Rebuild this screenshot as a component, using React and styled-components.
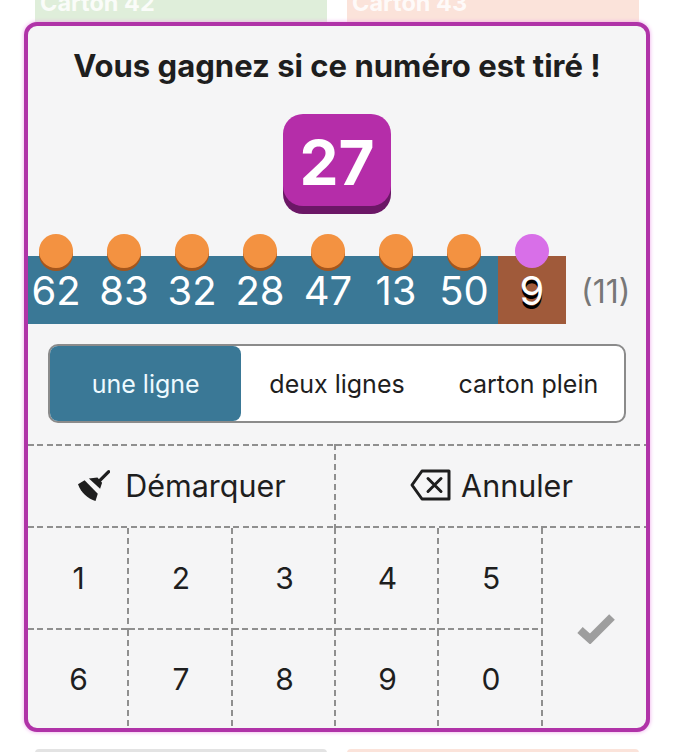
import React from "react";
import styled, { createGlobalStyle } from "styled-components";

const Global = createGlobalStyle`
  html, body { margin: 0; padding: 0; background: #fff; height: 752px; overflow: hidden; }
  * { box-sizing: border-box; }
  body { font-family: Inter, "Liberation Sans", sans-serif; color: #1e1e1e; }
`;

const DASH = "#8f8f8f";
const hDash = `repeating-linear-gradient(to right, ${DASH} 0 6px, transparent 6px 9.33px)`;
const vDash = `repeating-linear-gradient(to bottom, ${DASH} 0 6px, transparent 6px 10px)`;

const Page = styled.div`
  width: 674px;
  height: 752px;
  overflow: hidden;
  display: flex;
  flex-direction: column;
`;
const CardRow = styled.div`
  display: grid;
  grid-template-columns: 292px 292px;
  gap: 20px;
  padding: 0 35px;
  height: ${p => p.$h}px;
  margin-top: ${p => p.$gap || 0}px;
  flex: none;
`;
const Card = styled.div`
  background: ${p => p.$bg};
  border-radius: ${p => (p.$top ? "0" : "4px 4px 0 0")};
  padding: 0 5px;
  overflow: hidden;
`;
const CardTitle = styled.div`
  margin-top: -11px;
  color: rgba(255, 255, 255, 0.85);
  font-size: 23.5px;
  font-weight: 700;
  line-height: 28px;
`;
const Panel = styled.div`
  margin: 0 24px;
  width: 626px;
  height: 710px;
  flex: none;
  border: 4px solid #b033a8;
  border-radius: 13px;
  background: #f5f5f6;
  box-shadow: 0 0 4px #eda6ea;
  overflow: hidden;
  display: flex;
  flex-direction: column;
`;
const Title = styled.h1`
  margin: 22px 0 0;
  font-size: 31.05px;
  line-height: 36px;
  font-weight: 700;
  text-align: center;
  white-space: nowrap;
`;
const TileWrap = styled.div`
  display: flex;
  justify-content: center;
  margin-top: 30px;
  padding-bottom: 8px;
`;
const Tile = styled.div`
  width: 108px;
  height: 92px;
  border-radius: 20px;
  background: #b52da9;
  box-shadow: 0 8px 0 #6b1766;
  color: #fff;
  font-size: 62px;
  font-weight: 700;
  display: flex;
  align-items: center;
  justify-content: center;
  padding-top: 4px;
`;
const StripRow = styled.div`
  display: flex;
  align-items: center;
  margin: 42px 0 0 -6px;
`;
const Cell = styled.div`
  position: relative;
  width: 68px;
  height: 68px;
  flex: none;
  background: ${p => (p.$last ? "#a05a3a" : "#3a7896")};
  color: #fff;
  font-size: 40px;
  line-height: 70px;
  text-align: center;
  text-shadow: ${p => (p.$last ? "0 4px 0 #000" : "none")};
`;
const Dot = styled.span`
  position: absolute;
  left: 17px;
  top: -22px;
  width: 34px;
  height: 34px;
  border-radius: 50%;
  background: ${p => (p.$last ? "#d86fe8" : "#f39241")};
  box-shadow: ${p => (p.$last ? "none" : "0 3px 0 #a5561c")};
`;
const Count = styled.div`
  margin: 2px 0 0 15px;
  font-size: 32px;
  color: #777;
`;
const Segments = styled.div`
  margin: 20px 20px 0;
  height: 79px;
  display: grid;
  grid-template-columns: repeat(3, 1fr);
  border: 2px solid #8b8b8b;
  border-radius: 10px;
  background: #fff;
  flex: none;
`;
const Segment = styled.div`
  display: flex;
  align-items: center;
  justify-content: center;
  padding-top: 1px;
  font-size: 25px;
  border-radius: 8px;
  background: ${p => (p.$on ? "#3a7896" : "transparent")};
  color: ${p => (p.$on ? "#eefaff" : "#1e1e1e")};
`;
const Actions = styled.div`
  margin-top: 21px;
  display: grid;
  grid-template-columns: 306px 1fr;
  height: 84px;
  flex: none;
  background:
    ${hDash} left top / 100% 2px no-repeat,
    ${hDash} left bottom / 100% 2px no-repeat;
`;
const Action = styled.div`
  display: flex;
  align-items: center;
  justify-content: center;
  gap: ${p => p.$gap}px;
  padding: 0 0 2px ${p => p.$shift}px;
  font-size: 30.5px;
  background: ${p => (p.$line ? `${vDash} left top / 2px 100% no-repeat` : "none")};
  svg { flex: none; }
`;
const Keypad = styled.div`
  flex: 1;
  display: grid;
  grid-template-columns: 101px 104px 103px 103px 104px 1fr;
  grid-template-rows: 102px 1fr;
`;
const Key = styled.div`
  display: flex;
  align-items: center;
  justify-content: center;
  padding-bottom: ${p => (p.$first ? "2px" : "0")};
  font-size: 30px;
  background: ${p =>
    p.$first
      ? `${vDash} right top / 2px 100% no-repeat, ${hDash} left bottom / 100% 2px no-repeat`
      : `${vDash} right top / 2px 100% no-repeat`};
`;
const Confirm = styled.div`
  grid-column: 6;
  grid-row: 1 / span 2;
  display: flex;
  align-items: center;
  justify-content: center;
  padding-left: 2px;
`;

const BroomIcon = () => (
  <svg width="33" height="33" viewBox="24 18 100 100" fill="#1e1e1e">
    <path d="M120 26L92 54" stroke="#1e1e1e" strokeWidth="10" strokeLinecap="round" />
    <path d="M60 47L86 44L100 60L94 78Z" />
    <path d="M47 52L87 93L80 115C58 108 36 90 27 64Z" />
  </svg>
);

const BackspaceIcon = () => (
  <svg width="41" height="32" viewBox="0 0 41 32" fill="none" stroke="#1e1e1e" strokeWidth="3" strokeLinejoin="round" strokeLinecap="round">
    <path d="M12 2H39V30H12L2 16Z" />
    <path d="M18 9.5L31 22.5M31 9.5L18 22.5" />
  </svg>
);

const CheckIcon = () => (
  <svg width="38" height="32" viewBox="0 0 38 32" fill="none" stroke="#9e9e9e" strokeWidth="8">
    <polyline points="3,18 13,27 35,5" />
  </svg>
);

const draws = [62, 83, 32, 28, 47, 13, 50, 9];

export default function App() {
  return (
    <Page>
      <Global />
      <CardRow $h={22}>
        <Card $top $bg="#dfeeda"><CardTitle>Carton 42</CardTitle></Card>
        <Card $top $bg="#fbe3da"><CardTitle>Carton 43</CardTitle></Card>
      </CardRow>
      <Panel>
        <Title>Vous gagnez si ce numéro est tiré !</Title>
        <TileWrap><Tile>27</Tile></TileWrap>
        <StripRow>
          {draws.map((n, i) => (
            <Cell key={n} $last={i === draws.length - 1}>
              <Dot $last={i === draws.length - 1} />
              {n}
            </Cell>
          ))}
          <Count>(11)</Count>
        </StripRow>
        <Segments>
          <Segment $on>une ligne</Segment>
          <Segment>deux lignes</Segment>
          <Segment>carton plein</Segment>
        </Segments>
        <Actions>
          <Action $gap={15} $shift={1}><BroomIcon />Démarquer</Action>
          <Action $line $gap={10} $shift={3}><BackspaceIcon />Annuler</Action>
        </Actions>
        <Keypad>
          {[1, 2, 3, 4, 5].map(n => <Key key={n} $first>{n}</Key>)}
          <Confirm><CheckIcon /></Confirm>
          {[6, 7, 8, 9, 0].map(n => <Key key={n}>{n}</Key>)}
        </Keypad>
      </Panel>
      <CardRow $h={20} $gap={17}>
        <Card $bg="#e3e3e3" />
        <Card $bg="#fbe3da" />
      </CardRow>
    </Page>
  );
}
